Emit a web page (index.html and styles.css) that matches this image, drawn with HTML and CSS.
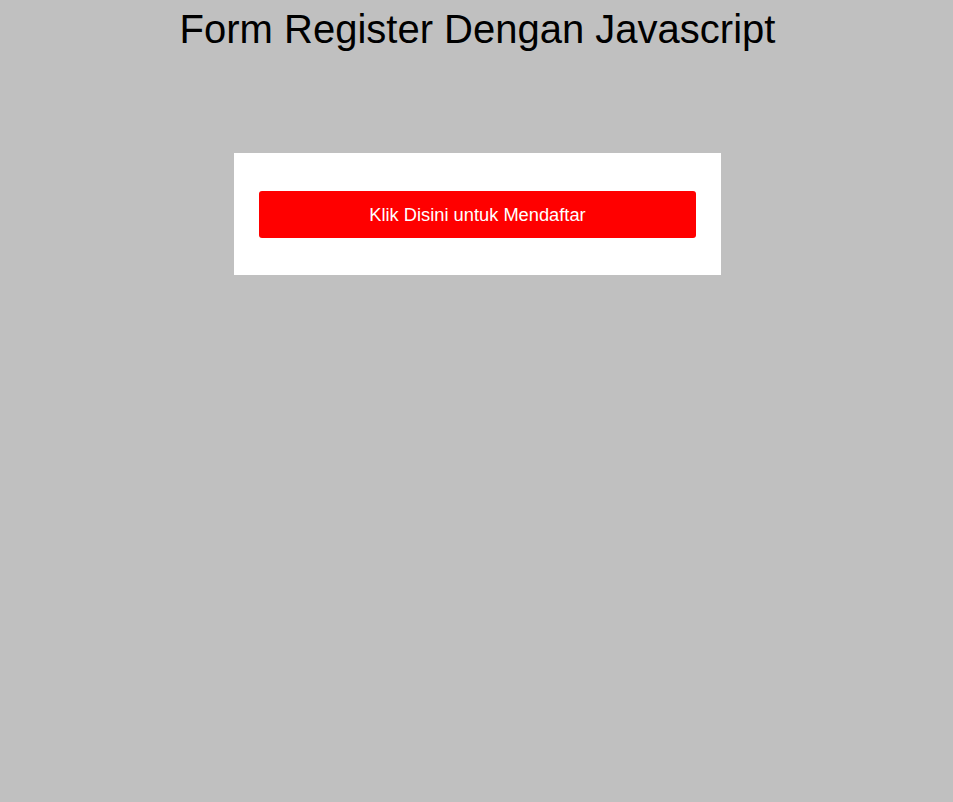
FILE: index.html
```html
<!DOCTYPE html>
<html>
<head>
<meta charset="utf-8">
<title>Form Register Dengan Javascript</title>
<link rel="stylesheet" href="styles.css">
</head>
<body>
<h1 class="title">Form Register Dengan Javascript</h1>
<div class="card">
  <button class="btn-register" type="button">Klik Disini untuk Mendaftar</button>
</div>
</body>
</html>
```

FILE: styles.css
```css
html, body {
  margin: 0;
  padding: 0;
  background: #c0c0c0;
  font-family: "Liberation Sans", Arial, sans-serif;
  min-height: 802px;
}
body {
  display: flex;
  flex-direction: column;
  align-items: center;
  padding-left: 2px;
  box-sizing: border-box;
}
.title {
  margin: 0;
  padding-top: 6px;
  font-size: 40px;
  font-weight: normal;
  line-height: 46px;
  color: #000;
  text-align: center;
}
.card {
  margin-top: 101px;
  width: 437px;
  padding: 38px 25px 37px;
  background: #fff;
}
.btn-register {
  display: block;
  width: 100%;
  height: 47px;
  border: none;
  border-radius: 3px;
  background: #ff0000;
  color: #fff;
  font-family: "Liberation Sans", Arial, sans-serif;
  font-size: 18.3px;
  padding: 0;
  cursor: pointer;
}
```
